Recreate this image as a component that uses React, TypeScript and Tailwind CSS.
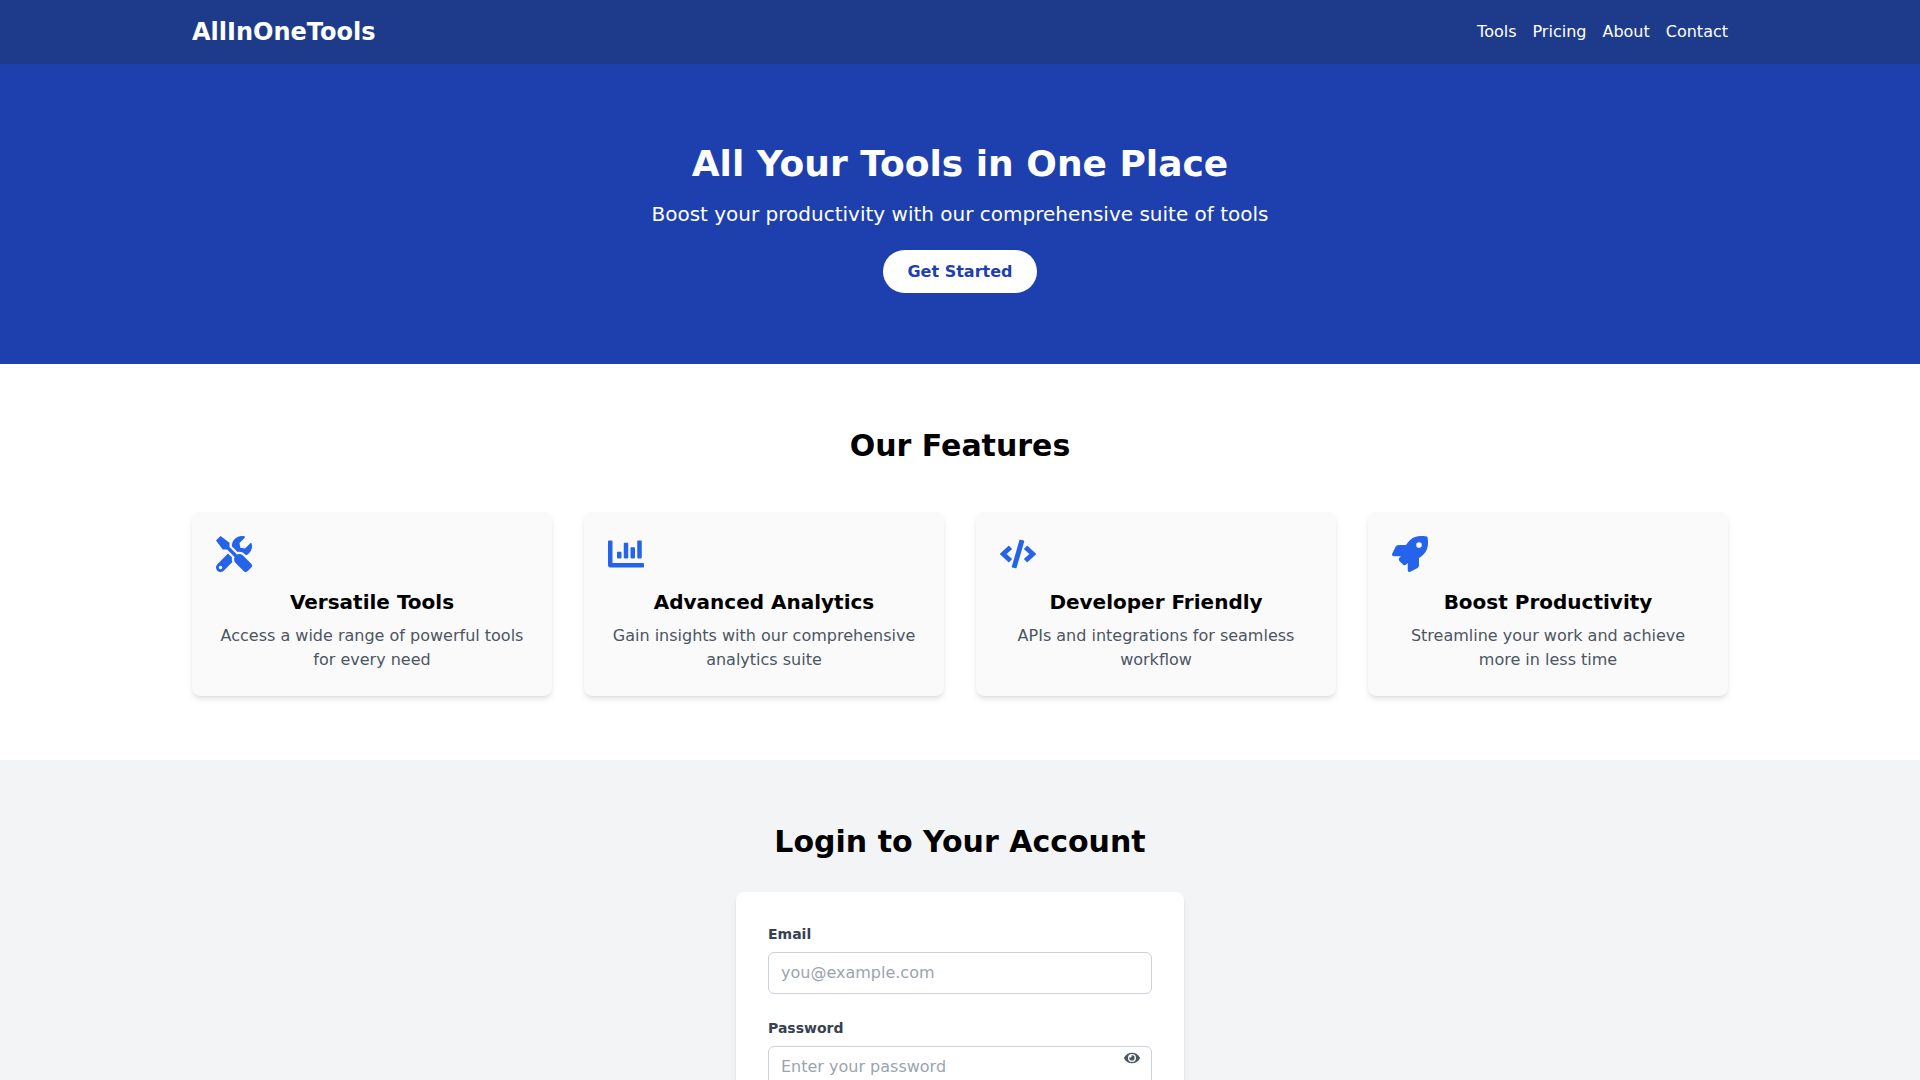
import { FaTools, FaChartBar, FaCode, FaRocket, FaEye } from "react-icons/fa";

const features = [
  { icon: FaTools, title: "Versatile Tools", text: "Access a wide range of powerful tools for every need" },
  { icon: FaChartBar, title: "Advanced Analytics", text: "Gain insights with our comprehensive analytics suite" },
  { icon: FaCode, title: "Developer Friendly", text: "APIs and integrations for seamless workflow" },
  { icon: FaRocket, title: "Boost Productivity", text: "Streamline your work and achieve more in less time" },
];

export default function App() {
  return (
    <div className="h-screen overflow-hidden bg-white font-['DejaVu_Sans',sans-serif] text-black">
      <nav className="bg-[#1e3a8a] text-white">
        <div className="mx-auto flex h-16 max-w-[1536px] items-center justify-between">
          <div className="text-2xl font-bold">AllInOneTools</div>
          <div className="flex gap-4 text-base">
            <a>Tools</a>
            <a>Pricing</a>
            <a>About</a>
            <a>Contact</a>
          </div>
        </div>
      </nav>
      <section className="flex h-[300px] flex-col items-center bg-[#1e40af] pt-20 text-center text-white">
        <h1 className="mb-4 text-4xl font-bold">All Your Tools in One Place</h1>
        <p className="mb-[22px] text-xl">Boost your productivity with our comprehensive suite of tools</p>
        <button className="h-[43px] rounded-full bg-white px-6 text-base font-bold text-[#1e40af]">Get Started</button>
      </section>
      <section className="py-16">
        <div className="mx-auto max-w-[1536px]">
          <h2 className="mb-12 text-center text-3xl font-bold">Our Features</h2>
          <div className="grid grid-cols-4 gap-8">
            {features.map((f) => (
              <div key={f.title} className="rounded-lg bg-[#fafafa] p-6 text-center shadow-md">
                <f.icon className="mb-4 text-[#2563eb]" size={36} />
                <h3 className="mb-2 text-xl font-bold">{f.title}</h3>
                <p className="text-base text-[#4b5563]">{f.text}</p>
              </div>
            ))}
          </div>
        </div>
      </section>
      <section className="bg-[#f3f4f6] py-16">
        <h2 className="mb-8 text-center text-3xl font-bold">Login to Your Account</h2>
        <div className="mx-auto w-[448px] rounded-lg bg-white p-8 shadow-md">
          <div className="mb-6">
            <label className="mb-2 block text-sm font-bold text-[#374151]">Email</label>
            <input
              type="email"
              placeholder="you@example.com"
              className="w-full rounded-md border border-[#ccd0da] px-3 py-2 text-base placeholder:text-[#9ca3af]"
            />
          </div>
          <div className="mb-6">
            <label className="mb-2 block text-sm font-bold text-[#374151]">Password</label>
            <div className="relative">
              <input
                type="password"
                placeholder="Enter your password"
                className="w-full rounded-md border border-[#ccd0da] px-3 py-2 text-base placeholder:text-[#9ca3af]"
              />
              <FaEye className="absolute right-3 top-[4px] text-[#4b5563]" size={16} />
            </div>
          </div>
        </div>
      </section>
    </div>
  );
}
